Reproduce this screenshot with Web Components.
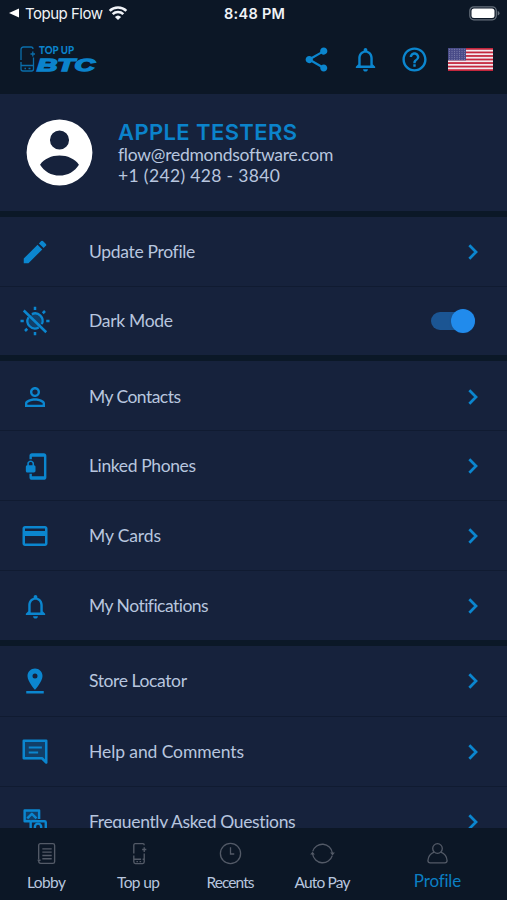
<!DOCTYPE html>
<html lang="en">
<head>
<meta charset="utf-8">
<title>Profile</title>
<style>
html,body{margin:0;height:100%;background:#0c1726}
body{overflow:hidden;font-family:Lato,"Liberation Sans",sans-serif}
</style>
</head>
<body>
<profile-screen></profile-screen>
<script>
const ICONS = {
  share:'<path fill="currentColor" d="M18 16.08c-.76 0-1.44.3-1.96.77L8.91 12.7c.05-.23.09-.46.09-.7s-.04-.47-.09-.7l7.05-4.11c.54.5 1.25.81 2.04.81 1.66 0 3-1.34 3-3s-1.34-3-3-3-3 1.34-3 3c0 .24.04.47.09.7L8.04 9.81C7.5 9.31 6.79 9 6 9c-1.66 0-3 1.34-3 3s1.34 3 3 3c.79 0 1.5-.31 2.04-.81l7.12 4.16c-.05.21-.08.43-.08.65 0 1.61 1.31 2.92 2.92 2.92s2.92-1.31 2.92-2.92-1.31-2.92-2.92-2.92z"/>',
  bell:'<path fill="currentColor" d="M12 22c1.1 0 2-.9 2-2h-4c0 1.1.9 2 2 2zm6-6v-5c0-3.07-1.63-5.64-4.5-6.32V4c0-.83-.67-1.5-1.5-1.5s-1.5.67-1.5 1.5v.68C7.64 5.36 6 7.92 6 11v5l-2 2v1h16v-1l-2-2zm-2 1H8v-6c0-2.48 1.51-4.5 4-4.5s4 2.02 4 4.5v6z"/>',
  help:'<path fill="currentColor" d="M11 18h2v-2h-2v2zm1-16C6.48 2 2 6.48 2 12s4.48 10 10 10 10-4.48 10-10S17.52 2 12 2zm0 18c-4.41 0-8-3.59-8-8s3.59-8 8-8 8 3.59 8 8-3.59 8-8 8zm0-14c-2.21 0-4 1.79-4 4h2c0-1.1.9-2 2-2s2 .9 2 2c0 2-3 1.75-3 5h2c0-2.25 3-2.5 3-5 0-2.21-1.79-4-4-4z"/>',
  pencil:'<path fill="currentColor" d="M3 17.25V21h3.75L17.81 9.94l-3.75-3.75L3 17.25zM20.71 7.04a1 1 0 0 0 0-1.41l-2.34-2.34a1 1 0 0 0-1.41 0l-1.83 1.83 3.75 3.75 1.83-1.83z"/>',
  sun:'<circle cx="12" cy="12" r="6" fill="currentColor" opacity=".3"/><g fill="none" stroke="currentColor" stroke-width="2"><path d="M12 .6v2.600M12 20.800v2.600M.4 12h2.600M21 12h2.600M4 20l1.800-1.800M18.200 5.800 20 4"/><path d="M9.500 6.500a6 6 0 0 1 8 8M15 17.200A6 6 0 0 1 6.800 9" stroke-width="1.800"/><path d="M3 3.600 21 21"/></g>',
  person:'<path fill="currentColor" d="M12 5.9a2.1 2.1 0 1 1 0 4.2 2.1 2.1 0 0 1 0-4.2m0 9c2.97 0 6.1 1.46 6.1 2.1v1.1H5.9V17c0-.64 3.13-2.1 6.1-2.1M12 4C9.79 4 8 5.79 8 8s1.79 4 4 4 4-1.79 4-4-1.79-4-4-4zm0 9c-2.67 0-8 1.34-8 4v3h16v-3c0-2.66-5.33-4-8-4z"/>',
  lockphone:'<path fill="currentColor" d="M19 1H9c-1.1 0-2 .9-2 2v3h2V4h10v16H9v-2H7v3c0 1.1.9 2 2 2h10c1.1 0 2-.9 2-2V3c0-1.1-.9-2-2-2zm-8.200 10V9.500C10.800 8.100 9.400 7 8 7S5.200 8.100 5.200 9.500V11C4.600 11 4 11.600 4 12.200v3.500c0 .7.600 1.300 1.200 1.300h5.500c.7 0 1.300-.6 1.300-1.200v-3.500c0-.7-.6-1.300-1.200-1.300zm-1.300 0h-3V9.500c0-.8.700-1.300 1.500-1.300s1.500.5 1.500 1.300V11z"/>',
  card:'<path fill="currentColor" d="M20 4H4c-1.110 0-1.990.89-1.990 2L2 18c0 1.110.89 2 2 2h16c1.110 0 2-.89 2-2V6c0-1.110-.89-2-2-2zm0 14H4v-6h16v6zm0-10H4V6h16v2z"/>',
  pin:'<path fill="currentColor" d="M18 8c0-3.310-2.690-6-6-6S6 4.690 6 8c0 4.500 6 11 6 11s6-6.500 6-11zm-8 0a2 2 0 1 1 4 0 2 2 0 0 1-4 0zM5 20v2h14v-2H5z"/>',
  comment:'<path d="M3 3h18v15H3z" fill="currentColor" opacity=".3"/><path fill="none" stroke="currentColor" stroke-width="2" stroke-linejoin="round" d="M21 3H3v14h14.600L21 20.400z"/><path stroke="currentColor" stroke-width="1.600" d="M7 8.300h10.500M7 12.300h7.500"/>',
  faq:'<g fill="none" stroke="currentColor" stroke-width="2" stroke-linejoin="round"><path fill="currentColor" fill-opacity=".3" d="M8 11H3V2h12v7"/><path d="M5.200 8.600 9 4.800l3.800 3.800"/><rect x="8" y="11" width="12.500" height="10" rx="1"/><path d="M11.500 17v-1.500a2.600 2.600 0 0 1 5.200 0V17"/></g>',
  chevron:'<path fill="none" stroke="currentColor" stroke-width="2.500" d="m8.600 5.800 6.200 6.200-6.200 6.200"/>',
  avatar:'<path fill="#fff" fill-rule="evenodd" d="M12 2a10 10 0 1 0 0 20 10 10 0 0 0 0-20zm0 3.300a2.900 2.900 0 1 1 0 5.800 2.900 2.900 0 0 1 0-5.800zM6.100 15.700C7.300 13.900 9.600 12.900 12 12.900s4.700 1 5.900 2.800c-1.200 2-3.400 3.300-5.900 3.300s-4.700-1.300-5.900-3.300z"/>',
  wifi:'<path fill="none" stroke="currentColor" stroke-width="3.100" d="M2 9.500a14.300 14.300 0 0 1 20 0M5.600 13.400a9.300 9.300 0 0 1 12.800 0"/><path fill="currentColor" d="m12 20.500-3.700-3.800a5.300 5.300 0 0 1 7.400 0z"/>',
  lobby:'<g fill="none" stroke="currentColor" stroke-width="1.300"><path d="M4.500 17.500V4.200c0-1 .6-1.700 1.600-1.700h12c1 0 1.700.7 1.700 1.700v15.600c0 1-.7 1.700-1.700 1.700H6.500c-1.200 0-2-.9-2-2.200M3.500 18.500h2.800"/><path d="M8 7.500h9M8 10.700h9M8 13.900h9M8 17h9"/></g>',
  topup:'<g fill="none" stroke="currentColor" stroke-width="1.300"><path d="M7.500 12V4c0-.8.500-1.500 1.300-1.500h7.500c.8 0 1.200.5 1.200 1.500M7.500 14v6c0 1 .6 1.700 1.500 1.700h7c.9 0 1.500-.7 1.500-1.700v-8M7.500 17.500h7M16 17.500h1.500M10 19.800h1.500M13 19.800h1.500M15.500 8.200h4M17.500 6v4.500"/></g>',
  clock:'<g fill="none" stroke="currentColor" stroke-width="1.250"><circle cx="12" cy="12" r="9.700"/><path d="M12 6v6.500h3.600"/></g>',
  refresh:'<g fill="none" stroke="currentColor" stroke-width="1.250"><path d="M2.600 10a9.700 9.700 0 0 1 18.900 1.500M21.400 14a9.700 9.700 0 0 1-18.900-1.500"/></g><path fill="currentColor" d="m.2 13 2.200-2.800L4.700 13zM19.300 11h4.600l-2.300 2.800z"/>',
  user:'<g fill="none" stroke="currentColor" stroke-width="1.250"><circle cx="12" cy="7.200" r="4.600"/><path d="M8.800 10.600C5 12 3 15.200 2.800 18.800c0 1.400.8 2.200 2.200 2.200h14c1.400 0 2.200-.8 2.200-2.200-.2-3.600-2.200-6.800-6-8.200"/></g>'
};

// One glyph from the icon set, sized by its "size" attribute.
class AppIcon extends HTMLElement {
  connectedCallback(){
    const s = this.getAttribute('size') || 26;
    this.attachShadow({mode:'open'}).innerHTML =
      `<style>:host{display:block;flex:none;width:${s}px;height:${s}px}svg{display:block;overflow:visible}</style>
       <svg width="${s}" height="${s}" viewBox="0 0 24 24">${ICONS[this.getAttribute('name')]}</svg>`;
  }
}

// A single line of text, tracked so that it spans the width in "w".
class TrackedText extends HTMLElement {
  connectedCallback(){
    this.attachShadow({mode:'open'}).innerHTML =
      `<style>:host{display:block;white-space:nowrap}span{display:inline-block}</style><span><slot></slot></span>`;
    const span = this.shadowRoot.querySelector('span');
    const w = +this.getAttribute('w'), n = this.textContent.length;
    const gap = (w - span.getBoundingClientRect().width) / (n - 1);
    span.style.letterSpacing = gap + 'px';
    span.style.marginRight = -gap + 'px';
  }
}

class StatusBar extends HTMLElement {
  connectedCallback(){
    this.attachShadow({mode:'open'}).innerHTML = `
    <style>
    :host{display:grid;grid-template-columns:1fr auto 1fr;align-items:center;height:28px;padding:0 7px 2px 9px;box-sizing:border-box;color:#f0f3f7;font:15px Inter,sans-serif}
    .l{display:flex;align-items:center}
    .l svg{margin-right:5px}
    .l app-icon{margin-left:5px}
    .t{font-weight:600;font-size:14.500px}
    .b{justify-self:end}
    </style>
    <div class="l"><svg width="11" height="10"><path fill="#fff" d="M0 5 10 .5v9z"/></svg><tracked-text w="78">Topup Flow</tracked-text><app-icon name="wifi" size="20"></app-icon></div>
    <tracked-text class="t" w="61">8:48 PM</tracked-text>
    <svg class="b" width="31" height="15"><rect x=".8" y=".8" width="26.500" height="13" rx="4" fill="none" stroke="#66707c" stroke-width="1.200"/><rect x="2.500" y="2.500" width="23" height="9.600" rx="2.500" fill="#fff"/><path d="M28.700 5v4.500q1.800-.6 1.800-2.250T28.700 5z" fill="#66707c"/></svg>`;
  }
}

class BrandLogo extends HTMLElement {
  connectedCallback(){
    this.attachShadow({mode:'open'}).innerHTML = `
    <style>:host{display:block}svg{display:block;overflow:visible}</style>
    <svg width="78" height="28" fill="#0b83cc">
      <path fill="none" stroke="#0b83cc" stroke-width="1.300" opacity=".8" d="M1 15V4.500Q1 2 3.500 2H11q2 0 2 2M1 17v7q0 2 2 2h8.500q2 0 2-2v-11.500M1 20.500h12.500M4.500 23.500H6M8.500 23.500h2M10.500 9h4.500M12.800 6.500v5"/>
      <text x="19" y="9" font-family="Lato" font-weight="900" font-size="10.500" textLength="35" lengthAdjust="spacingAndGlyphs">TOP UP</text>
      <text x="17" y="25.800" font-family="Liberation Sans" font-weight="700" font-style="italic" font-size="16.500" stroke="#0b83cc" stroke-width="1.400" textLength="58" lengthAdjust="spacingAndGlyphs">BTC</text>
    </svg>`;
  }
}

class UsFlag extends HTMLElement {
  connectedCallback(){
    let s = '', d = '';
    for (let i=0;i<13;i+=2) s += `<rect y="${i*23/13}" width="45" height="${23/13}" fill="#c3263c"/>`;
    for (let r=0;r<6;r++) for (let c=0;c<7;c++) d += `<circle cx="${1.500+c*2.500}" cy="${1.300+r*2}" r=".45"/>`;
    this.attachShadow({mode:'open'}).innerHTML = `<style>:host{display:block}svg{display:block}</style>
    <svg width="45" height="23"><rect width="45" height="23" fill="#f3e9ef"/>${s}<rect width="18" height="12.400" fill="#494b88"/><g fill="#aeb0d0">${d}</g></svg>`;
  }
}

class AppHeader extends HTMLElement {
  connectedCallback(){
    this.attachShadow({mode:'open'}).innerHTML = `
    <style>
    :host{display:flex;align-items:center;height:66px;padding:0 14px 4px 20px;box-sizing:border-box;color:#0b86cf}
    brand-logo{margin-right:auto}
    .i{display:flex;align-items:center;gap:20px;margin-right:19px}
    </style>
    <brand-logo></brand-logo>
    <div class="i"><app-icon name="share" size="29"></app-icon><app-icon name="bell" size="29"></app-icon><app-icon name="help" size="29"></app-icon></div>
    <us-flag></us-flag>`;
  }
}

class ProfileCard extends HTMLElement {
  connectedCallback(){
    this.attachShadow({mode:'open'}).innerHTML = `
    <style>
    :host{display:flex;align-items:center;gap:19px;height:117px;padding-left:20px;box-sizing:border-box;background:#16223c;color:#b8c6df}
    .n{font:600 22px/24px Inter,sans-serif;color:#0b83cb}
    .e{font-size:17.500px;line-height:21px}
    </style>
    <app-icon name="avatar" size="79"></app-icon>
    <div><tracked-text class="n" w="179">APPLE TESTERS</tracked-text><tracked-text class="e" w="215">flow@redmondsoftware.com</tracked-text><tracked-text class="e" w="162">+1 (242) 428 - 3840</tracked-text></div>`;
  }
}

class MenuGroup extends HTMLElement {
  connectedCallback(){
    this.attachShadow({mode:'open'}).innerHTML = `<style>:host{display:block;border-top:6px solid #0b1827}</style><slot></slot>`;
  }
}

class MenuRow extends HTMLElement {
  connectedCallback(){
    const g = a => this.getAttribute(a);
    const end = this.hasAttribute('toggle') ? '<toggle-switch></toggle-switch>' : '<app-icon name="chevron" size="26"></app-icon>';
    this.attachShadow({mode:'open'}).innerHTML = `
    <style>
    :host{display:flex;align-items:center;height:${g('h')||70}px;padding:${g('drop')||0}px 21px 0 22px;box-sizing:border-box;background:#16223c;border-bottom:1px solid #101b31;color:#0b86cf}
    :host(:last-child){border-bottom:0}
    .ic{width:26px;display:flex;justify-content:center}
    tracked-text{margin:0 auto 0 41px;color:#b8c6df;font-size:17.500px;line-height:22px}
    </style>
    <div class="ic"><app-icon name="${g('icon')}" size="${g('size')||26}"></app-icon></div>
    <tracked-text w="${g('w')}">${g('label')}</tracked-text>${end}`;
  }
}

class ToggleSwitch extends HTMLElement {
  connectedCallback(){
    this.attachShadow({mode:'open'}).innerHTML = `
    <style>
    :host{display:flex;align-items:center;justify-content:flex-end;width:44px;height:18px;border-radius:9px;background:#1b5593;margin-right:11px}
    i{width:24px;height:24px;border-radius:50%;background:#218bec;flex:none;box-shadow:0 0 2px #16407066}
    </style><i></i>`;
  }
}

class NavTab extends HTMLElement {
  connectedCallback(){
    const on = this.hasAttribute('active');
    this.attachShadow({mode:'open'}).innerHTML = `
    <style>
    :host{display:flex;flex-direction:column;align-items:center;gap:${on?4:6}px;padding-top:13px;color:#535a67}
    tracked-text{font-size:${on?17:15.500}px;line-height:${on?21:20}px;color:${on?'#0b7fc4':'#b8c6df'}}
    </style>
    <app-icon name="${this.getAttribute('icon')}" size="25"></app-icon><tracked-text w="${this.getAttribute('w')}">${this.getAttribute('label')}</tracked-text>`;
  }
}

class NavBar extends HTMLElement {
  connectedCallback(){
    this.attachShadow({mode:'open'}).innerHTML = `
    <style>:host{display:grid;grid-template-columns:93px 91px 93px 91px 139px;flex:none;height:72px;background:#0c1726}</style>
    <nav-tab icon="lobby" label="Lobby" w="39"></nav-tab>
    <nav-tab icon="topup" label="Top up" w="43"></nav-tab>
    <nav-tab icon="clock" label="Recents" w="48"></nav-tab>
    <nav-tab icon="refresh" label="Auto Pay" w="56"></nav-tab>
    <nav-tab icon="user" label="Profile" w="47" active></nav-tab>`;
  }
}

class ProfileScreen extends HTMLElement {
  connectedCallback(){
    this.attachShadow({mode:'open'}).innerHTML = `
    <style>
    :host{display:flex;flex-direction:column;width:507px;height:900px;background:#0c1726}
    main{flex:1;min-height:0;overflow:hidden}
    </style>
    <status-bar></status-bar><app-header></app-header>
    <main>
      <profile-card></profile-card>
      <menu-group><menu-row icon="pencil" size="30" label="Update Profile" w="106"></menu-row><menu-row icon="sun" size="30" label="Dark Mode" w="84" h="68" toggle></menu-row></menu-group>
      <menu-group><menu-row icon="person" size="30" label="My Contacts" w="92" drop="2"></menu-row><menu-row icon="lockphone" size="29" label="Linked Phones" w="107" drop="1"></menu-row><menu-row icon="card" size="30" label="My Cards" w="72" drop="1"></menu-row><menu-row icon="bell" size="29" label="My Notifications" w="120" h="69" drop="1"></menu-row></menu-group>
      <menu-group><menu-row icon="pin" size="30" label="Store Locator" w="98" h="71"></menu-row><menu-row icon="comment" size="30" label="Help and Comments" w="155" drop="1"></menu-row><menu-row icon="faq" size="29" label="Frequently Asked Questions" w="207"></menu-row></menu-group>
    </main>
    <nav-bar></nav-bar>`;
  }
}

for (const [n,c] of [['app-icon',AppIcon],['tracked-text',TrackedText],['status-bar',StatusBar],['brand-logo',BrandLogo],['us-flag',UsFlag],['app-header',AppHeader],['profile-card',ProfileCard],['toggle-switch',ToggleSwitch],['menu-row',MenuRow],['menu-group',MenuGroup],['nav-tab',NavTab],['nav-bar',NavBar],['profile-screen',ProfileScreen]])
  customElements.define(n,c);
</script>
</body>
</html>
